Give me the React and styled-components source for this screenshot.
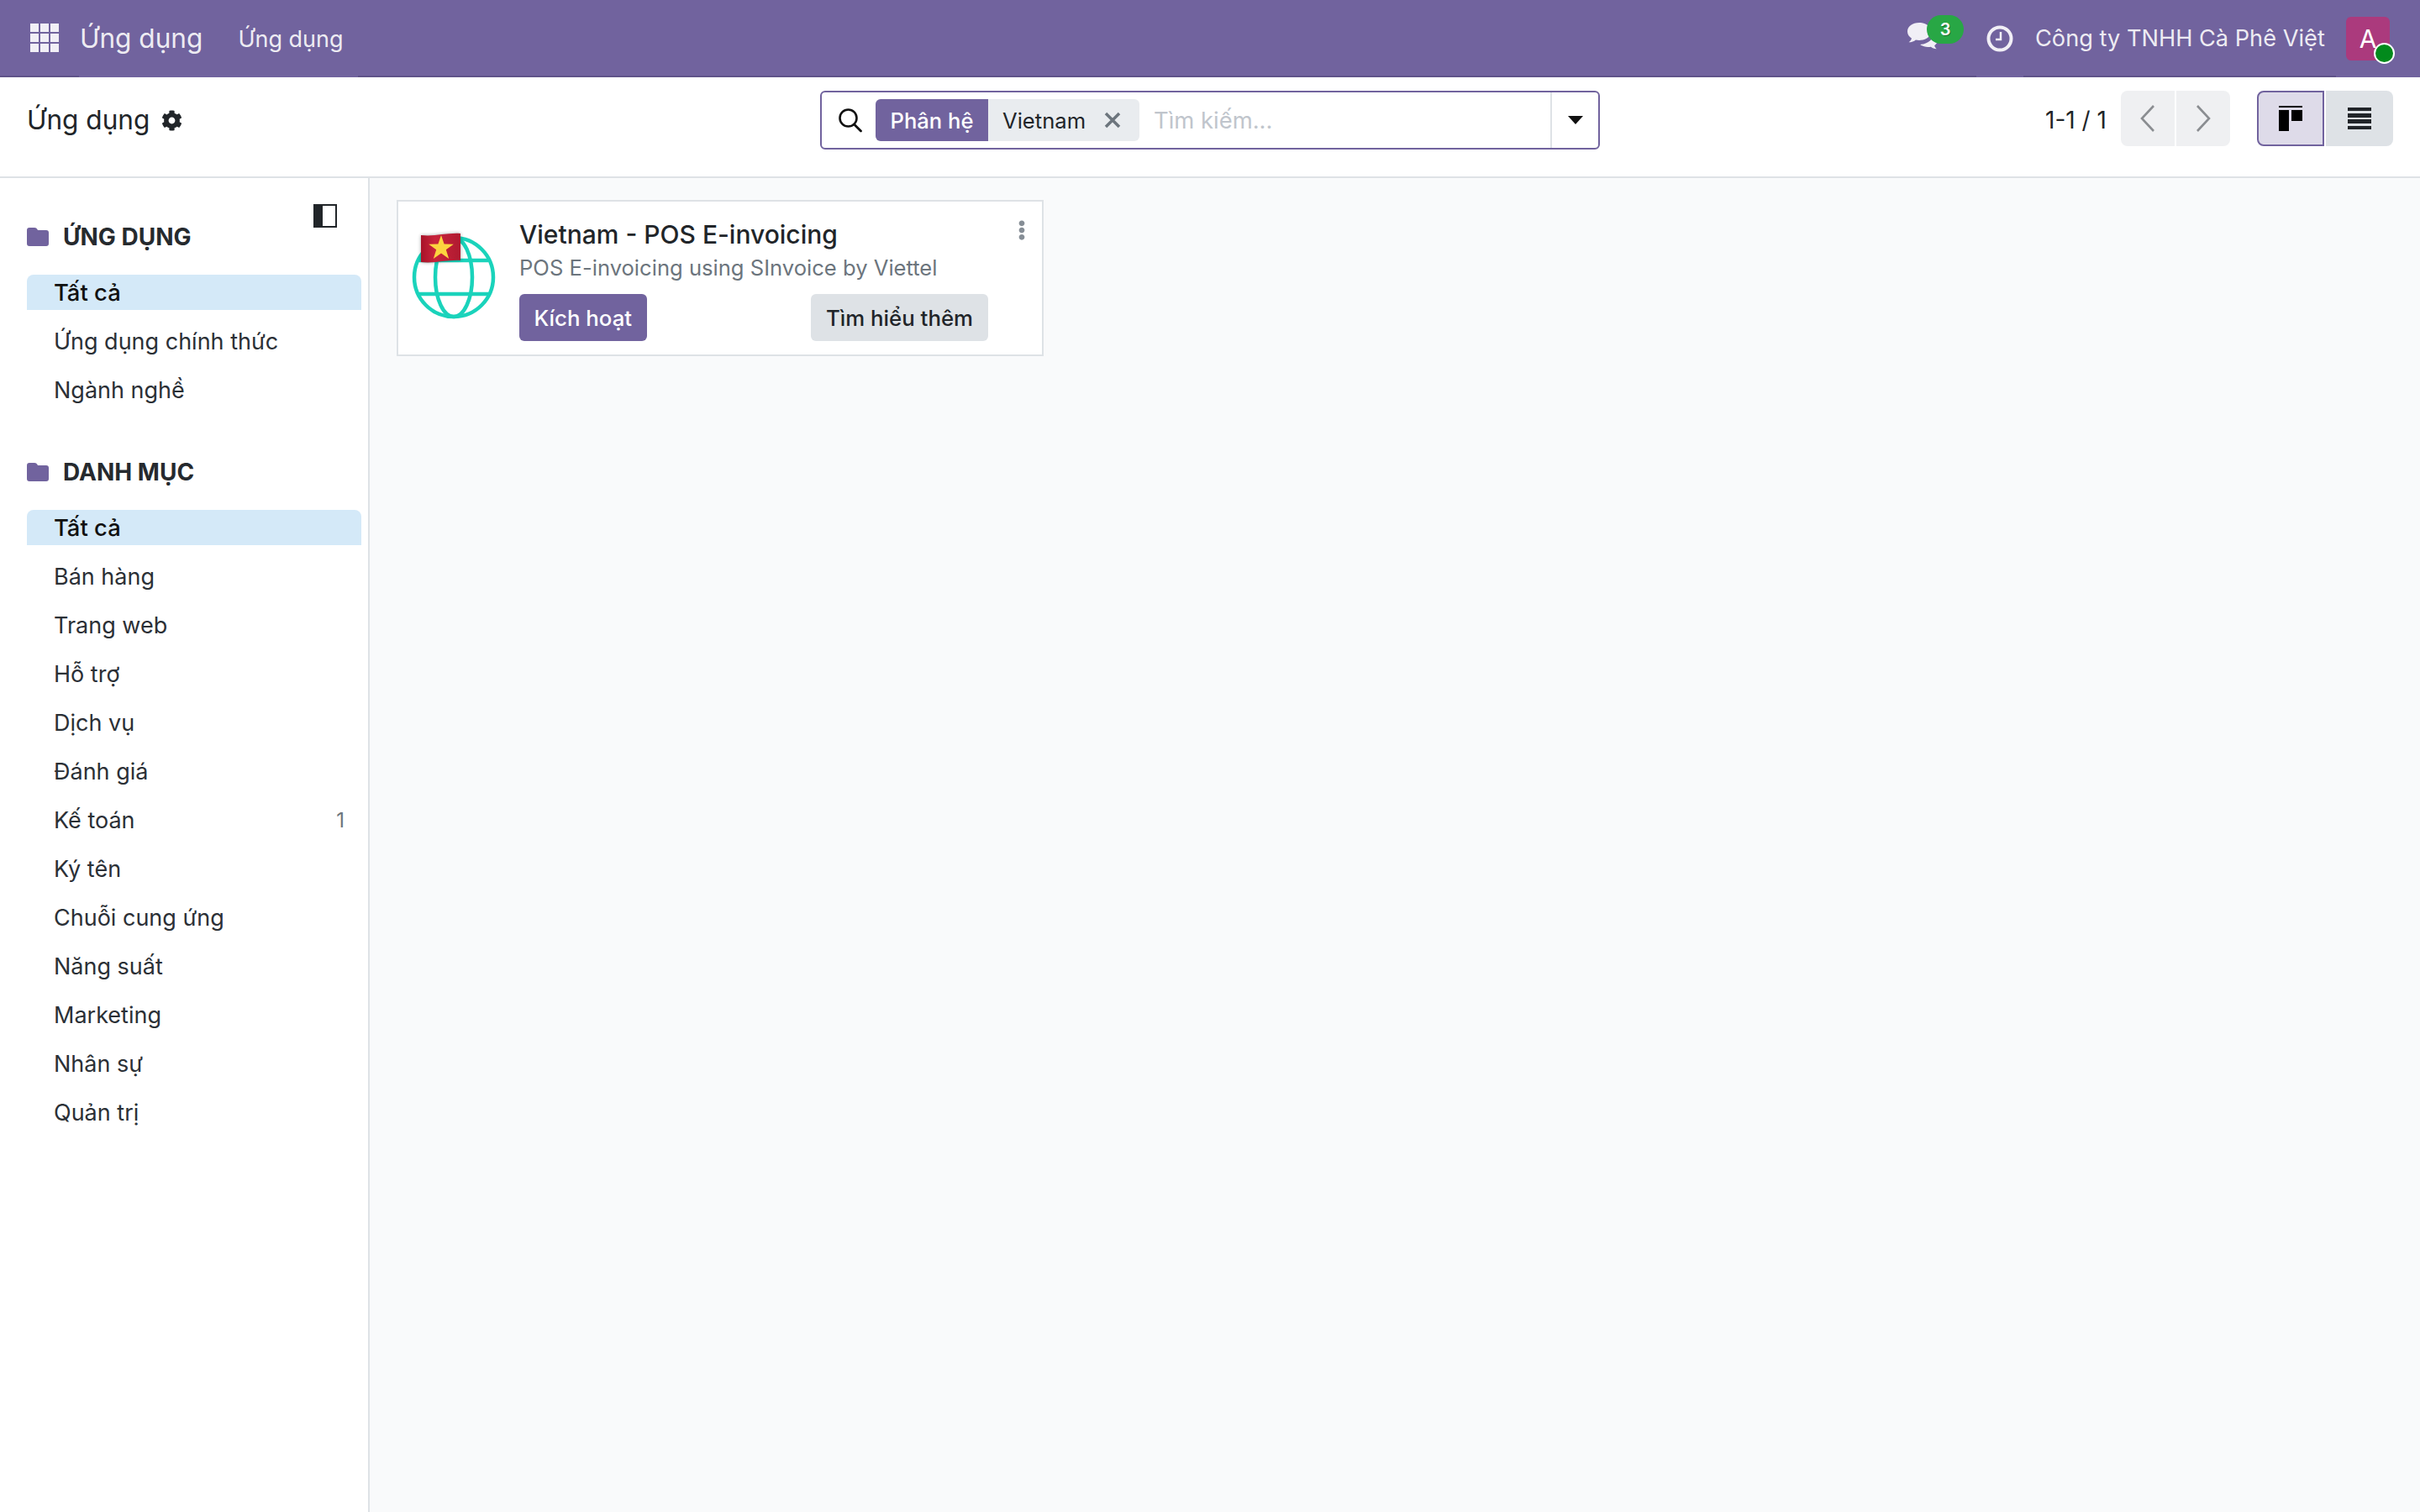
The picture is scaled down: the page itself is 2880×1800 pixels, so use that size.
import React from 'react'
import styled, { createGlobalStyle } from 'styled-components'
import { FaCog, FaEllipsisV } from 'react-icons/fa'

const Global = createGlobalStyle`
  html, body { margin: 0; padding: 0; background: #fff; }
  body { font-family: Inter, "Noto Sans", sans-serif; color: #212529; }
  * { box-sizing: border-box; }
`

const Page = styled.div`
  width: 2880px;
  height: 1800px;
  display: flex;
  flex-direction: column;
  overflow: hidden;
`

const Nav = styled.header`
  height: 92px;
  flex: none;
  display: flex;
  background: #71639e;
  color: rgba(255, 255, 255, 0.9);
  white-space: nowrap;
`

const NavCell = styled.div`
  height: 92px;
  display: flex;
  align-items: center;
  flex: ${p => (p.$grow ? 1 : 'none')};
  width: ${p => (p.$w ? p.$w + 'px' : 'auto')};
  padding-left: ${p => p.$pl || 0}px;
  border-bottom: ${p => (p.$line ? '2px solid #5f5389' : 'none')};
  position: relative;
`

const AppsIcon = styled.div`
  display: grid;
  grid-template-columns: repeat(3, 10px);
  grid-auto-rows: 10px;
  gap: 2px;
`

const AppsDot = styled.span`
  background: #f1eff6;
`

const Brand = styled.span`
  font-size: 31.6px;
  margin-top: -2px;
`

const MenuLink = styled.span`
  font-size: 27px;
  margin-left: 42px;
`

const Badge = styled.span`
  position: absolute;
  left: 23px;
  top: 18px;
  width: 44px;
  height: 34px;
  border-radius: 17px;
  background: #28a745;
  color: #fff;
  font-size: 20px;
  font-weight: 600;
  display: flex;
  align-items: center;
  justify-content: center;
  text-shadow: 1px 1px 0 rgba(0, 0, 0, 0.35);
`

const Company = styled.span`
  font-size: 27.2px;
`

const Avatar = styled.div`
  width: 52px;
  height: 52px;
  border-radius: 6px;
  background: #ab3a7d;
  color: #fff;
  font-size: 30px;
  display: flex;
  align-items: center;
  justify-content: center;
  position: relative;
`

const StatusDot = styled.span`
  position: absolute;
  right: -6px;
  bottom: -4px;
  width: 25px;
  height: 25px;
  border-radius: 50%;
  background: #028a1c;
  border: 2px solid #fff;
`

const ControlPanel = styled.div`
  height: 120px;
  flex: none;
  display: grid;
  grid-template-columns: 976px 928px 1fr;
  align-items: start;
  border-bottom: 2px solid #dee2e6;
  background: #fff;
`

const TitleWrap = styled.div`
  display: flex;
  align-items: center;
  height: 100px;
  padding-left: 32px;
  gap: 14px;
  font-size: 31.6px;
  svg { font-size: 25px; margin-top: 2px; }
`

const SearchBox = styled.div`
  margin-top: 16px;
  height: 70px;
  border: 2px solid #71639e;
  border-radius: 6px;
  display: flex;
  align-items: center;
  padding-left: 19px;
`

const SearchIcon = styled.svg`
  width: 30px;
  height: 30px;
  margin-right: 15px;
  flex: none;
`

const Facet = styled.div`
  display: flex;
  height: 50px;
  width: 314px;
  border-radius: 6px;
  overflow: hidden;
  background: #e9ecef;
  font-size: 25.6px;
  align-items: stretch;
`

const FacetLabel = styled.span`
  width: 134px;
  background: #71639e;
  color: #fff;
  font-weight: 500;
  display: flex;
  align-items: center;
  justify-content: center;
`

const FacetValue = styled.span`
  display: flex;
  align-items: center;
  padding-left: 17px;
  gap: 22px;
`

const Placeholder = styled.span`
  font-size: 27.4px;
  color: #c0c5cc;
  margin-left: 17px;
  flex: 1;
`

const CaretCell = styled.div`
  width: 57px;
  height: 100%;
  border-left: 2px solid #dee2e6;
  display: flex;
  align-items: center;
  justify-content: center;
`

const Caret = styled.span`
  width: 0;
  height: 0;
  border-left: 9px solid transparent;
  border-right: 9px solid transparent;
  border-top: 10px solid #111;
`

const Tools = styled.div`
  margin-top: 16px;
  height: 66px;
  display: flex;
  align-items: center;
  padding-left: 530px;
`

const PagerText = styled.span`
  font-size: 28px;
  margin-right: 16px;
  margin-top: 3px;
  white-space: nowrap;
  width: 74px;
`

const BtnGroup = styled.div`
  display: flex;
  gap: 2px;
  height: 66px;
  margin-left: ${p => p.$ml || 0}px;
`

const PagerBtn = styled.button`
  width: 64px;
  padding: 0;
  border: 0;
  background: #eff0f2;
  display: flex;
  align-items: center;
  justify-content: center;
  border-radius: ${p => (p.$left ? '8px 0 0 8px' : '0 8px 8px 0')};
`

const ViewBtn = styled.button`
  width: 80px;
  padding: 0;
  background: ${p => (p.$active ? '#dedbe9' : '#dee2e6')};
  border: ${p => (p.$active ? '2px solid #71639e' : '0')};
  display: flex;
  align-items: center;
  justify-content: center;
  border-radius: ${p => (p.$active ? '8px 0 0 8px' : '0 8px 8px 0')};
`

const Body = styled.div`
  flex: 1;
  display: flex;
  min-height: 0;
`

const Sidebar = styled.aside`
  width: 440px;
  flex: none;
  border-right: 2px solid #dee2e6;
  background: #fff;
  padding: 47px 8px 0 32px;
  position: relative;
`

const CollapseIcon = styled.svg`
  position: absolute;
  left: 373px;
  top: 31px;
  width: 28px;
  height: 28px;
`

const GroupTitle = styled.div`
  height: 46px;
  display: flex;
  align-items: center;
  gap: 17px;
  font-size: 28px;
  font-weight: 700;
  margin-bottom: 22px;
  margin-top: ${p => p.$mt || 0}px;
  color: #262a2e;
`

const FolderIcon = styled.svg`
  width: 26px;
  height: 22px;
  flex: none;
`

const Item = styled.div`
  height: 42px;
  margin-bottom: 16px;
  padding: 0 20px 0 32px;
  display: flex;
  align-items: center;
  justify-content: space-between;
  font-size: ${p => (p.$active ? 27.4 : 27)}px;
  font-weight: ${p => (p.$active ? 500 : 400)};
  color: ${p => (p.$active ? '#111' : '#2b3036')};
  background: ${p => (p.$active ? '#d4e9f8' : 'transparent')};
  border-radius: ${p => (p.$active ? '8px 8px 0 0' : '0')};
`

const Count = styled.span`
  font-size: 24px;
  color: #6c757d;
`

const Content = styled.main`
  flex: 1;
  background: #f9fafb;
  padding: 26px 32px;
`

const Card = styled.article`
  width: 770px;
  height: 186px;
  background: #fff;
  border: 2px solid #dee2e6;
  display: flex;
  position: relative;
  padding: 0 0 0 16px;
`

const GlobeIcon = styled.svg`
  width: 102px;
  height: 122px;
  margin-top: 29px;
  flex: none;
`

const CardBody = styled.div`
  margin-left: 26px;
  width: 558px;
  padding-top: 19px;
`

const CardTitle = styled.div`
  font-size: 30px;
  font-weight: 500;
  line-height: 40px;
  color: #212529;
`

const CardDesc = styled.div`
  font-size: 25.6px;
  line-height: 40px;
  color: #6c757d;
`

const CardActions = styled.div`
  display: flex;
  justify-content: space-between;
  margin-top: 11px;
`

const Button = styled.button`
  height: 56px;
  padding: 0 ${p => (p.$primary ? 17.5 : 18)}px;
  border: 0;
  border-radius: 6px;
  font-family: inherit;
  font-size: 25.8px;
  font-weight: 500;
  background: ${p => (p.$primary ? '#71639e' : '#dee2e6')};
  color: ${p => (p.$primary ? '#fff' : '#212529')};
`

const Kebab = styled.span`
  position: absolute;
  right: 12px;
  top: 22px;
  color: #868e96;
  font-size: 24px;
  line-height: 0;
`

const groups = [
  { title: 'ỨNG DỤNG', items: ['Tất cả', 'Ứng dụng chính thức', 'Ngành nghề'] },
  {
    title: 'DANH MỤC',
    items: ['Tất cả', 'Bán hàng', 'Trang web', 'Hỗ trợ', 'Dịch vụ', 'Đánh giá', 'Kế toán', 'Ký tên', 'Chuỗi cung ứng', 'Năng suất', 'Marketing', 'Nhân sự', 'Quản trị'],
  },
]

const Folder = () => (
  <FolderIcon viewBox="0 0 26 22">
    <path d="M3 0h6c2 0 3 1 4 3h10c2 0 3 1 3 3v13c0 2-1 3-3 3H3c-2 0-3-1-3-3V3c0-2 1-3 3-3z" fill="#71639e" />
  </FolderIcon>
)

const Globe = () => (
  <GlobeIcon viewBox="0 0 102 122">
    <defs>
      <linearGradient id="flagShade" x1="0" y1="0" x2="1" y2="0">
        <stop offset="0" stopColor="#a81228" />
        <stop offset="0.35" stopColor="#c8243c" />
        <stop offset="1" stopColor="#b01a30" />
      </linearGradient>
      <filter id="flagBlur" x="-20%" y="-20%" width="140%" height="140%">
        <feGaussianBlur stdDeviation="2" />
      </filter>
    </defs>
    <g fill="none" stroke="#1ad3bb" strokeWidth="4.5">
      <circle cx="50" cy="61" r="47" />
      <ellipse cx="50" cy="61" rx="22" ry="47" />
      <path d="M9 41h82M9 81h82" />
    </g>
    <path d="M11 11c16 2 30-3 47-2v32c-16-1-31 4-47 2z" fill="#000" opacity="0.35" filter="url(#flagBlur)" />
    <path d="M11 11c16 2 30-3 47-2v32c-16-1-31 4-47 2z" fill="url(#flagShade)" />
    <path d="M35 13l3.600 10.500 11.200.2-9 6.600 3.400 10.600-9.200-6.300-9.200 6.300 3.400-10.600-9-6.600 11.200-.2z" fill="#fcd53f" transform="translate(0 -2)" />
  </GlobeIcon>
)

const App = () => (
  <Page>
    <Global />
    <Nav>
      <NavCell $w={94} $pl={36} $line>
        <AppsIcon>
          {Array.from({ length: 9 }).map((_, i) => <AppsDot key={i} />)}
        </AppsIcon>
      </NavCell>
      <NavCell $w={332} $pl={1}>
        <Brand>Ứng dụng</Brand>
        <MenuLink>Ứng dụng</MenuLink>
      </NavCell>
      <NavCell $grow $line />
      <NavCell $w={82} $line>
        <svg width="36" height="32" viewBox="0 0 36 32" style={{ marginTop: -4 }}>
          <path d="M14 0C6 0 0 4.600 0 10.500c0 3.400 2 6.300 5 8.200-.5 1.800-1.600 3.300-3.400 4.600 3.400 0 6.300-1.100 8.300-2.900 1.300.3 2.700.5 4.100.5 8 0 14-4.600 14-10.400S22 0 14 0z" fill="#f1eff6" />
          <path d="M30 12.500c3.700 1.700 6 4.600 6 8 0 2.600-1.500 5-3.800 6.700.3 1.400 1.100 2.900 2.500 4-2.800 0-5.100-1-6.800-2.500-1 .2-2.200.4-3.400.4-3.800 0-7.100-1.200-9.300-3.200 8.800-.4 15.700-5.900 15.700-12.400z" fill="#f1eff6" />
        </svg>
        <Badge>3</Badge>
      </NavCell>
      <NavCell $w={56} $pl={12}>
        <svg width="32" height="32" viewBox="0 0 32 32">
          <circle cx="16" cy="16" r="13.500" fill="none" stroke="#f1eff6" strokeWidth="4" />
          <path d="M17 8v9h-6" fill="none" stroke="#f1eff6" strokeWidth="2.500" />
        </svg>
      </NavCell>
      <NavCell $w={372} $pl={14} $line>
        <Company>Công ty TNHH Cà Phê Việt</Company>
      </NavCell>
      <NavCell $w={100} $pl={12}>
        <Avatar>A<StatusDot /></Avatar>
      </NavCell>
    </Nav>

    <ControlPanel>
      <TitleWrap>
        Ứng dụng
        <FaCog />
      </TitleWrap>
      <SearchBox>
        <SearchIcon viewBox="0 0 30 30">
          <circle cx="12.500" cy="12.500" r="10" fill="none" stroke="#111" strokeWidth="2.600" />
          <path d="M19.500 20l8 8" stroke="#111" strokeWidth="2.800" strokeLinecap="round" />
        </SearchIcon>
        <Facet>
          <FacetLabel>Phân hệ</FacetLabel>
          <FacetValue>
            Vietnam
            <svg width="20" height="20" viewBox="0 0 20 20">
              <path d="M2 2l16 16M18 2L2 18" stroke="#6c757d" strokeWidth="3.500" />
            </svg>
          </FacetValue>
        </Facet>
        <Placeholder>Tìm kiếm...</Placeholder>
        <CaretCell><Caret /></CaretCell>
      </SearchBox>
      <Tools>
        <PagerText>1-1 / 1</PagerText>
        <BtnGroup>
          <PagerBtn $left>
            <svg width="18" height="34" viewBox="0 0 18 34">
              <path d="M16 2L2 17l14 15" fill="none" stroke="#8a8d91" strokeWidth="2.600" />
            </svg>
          </PagerBtn>
          <PagerBtn>
            <svg width="18" height="34" viewBox="0 0 18 34">
              <path d="M2 2l14 15L2 32" fill="none" stroke="#8a8d91" strokeWidth="2.600" />
            </svg>
          </PagerBtn>
        </BtnGroup>
        <BtnGroup $ml={32}>
          <ViewBtn $active>
            <svg width="30" height="30" viewBox="0 0 30 30">
              <path d="M1 0h28v2H1zM1 5h12v25H1zM16 5h13v13H16z" fill="#000" />
            </svg>
          </ViewBtn>
          <ViewBtn>
            <svg width="28" height="26" viewBox="0 0 28 26">
              <path d="M0 0h28v4H0zM0 7h28v5H0zM0 14h28v5H0zM0 22h28v4H0z" fill="#212529" />
            </svg>
          </ViewBtn>
        </BtnGroup>
      </Tools>
    </ControlPanel>

    <Body>
      <Sidebar>
        <CollapseIcon viewBox="0 0 28 28">
          <rect x="1" y="1" width="26" height="26" fill="#fff" stroke="#212529" strokeWidth="2" />
          <rect x="1" y="1" width="10" height="26" fill="#212529" />
        </CollapseIcon>
        {groups.map((g, gi) => (
          <div key={g.title}>
            <GroupTitle $mt={gi ? 54 : 0}>
              <Folder />
              {g.title}
            </GroupTitle>
            {g.items.map((it, i) => (
              <Item key={it} $active={i === 0}>
                {it}
                {it === 'Kế toán' && <Count>1</Count>}
              </Item>
            ))}
          </div>
        ))}
      </Sidebar>
      <Content>
        <Card>
          <Globe />
          <CardBody>
            <CardTitle>Vietnam - POS E-invoicing</CardTitle>
            <CardDesc>POS E-invoicing using SInvoice by Viettel</CardDesc>
            <CardActions>
              <Button $primary>Kích hoạt</Button>
              <Button>Tìm hiểu thêm</Button>
            </CardActions>
          </CardBody>
          <Kebab><FaEllipsisV /></Kebab>
        </Card>
      </Content>
    </Body>
  </Page>
)

export default App
